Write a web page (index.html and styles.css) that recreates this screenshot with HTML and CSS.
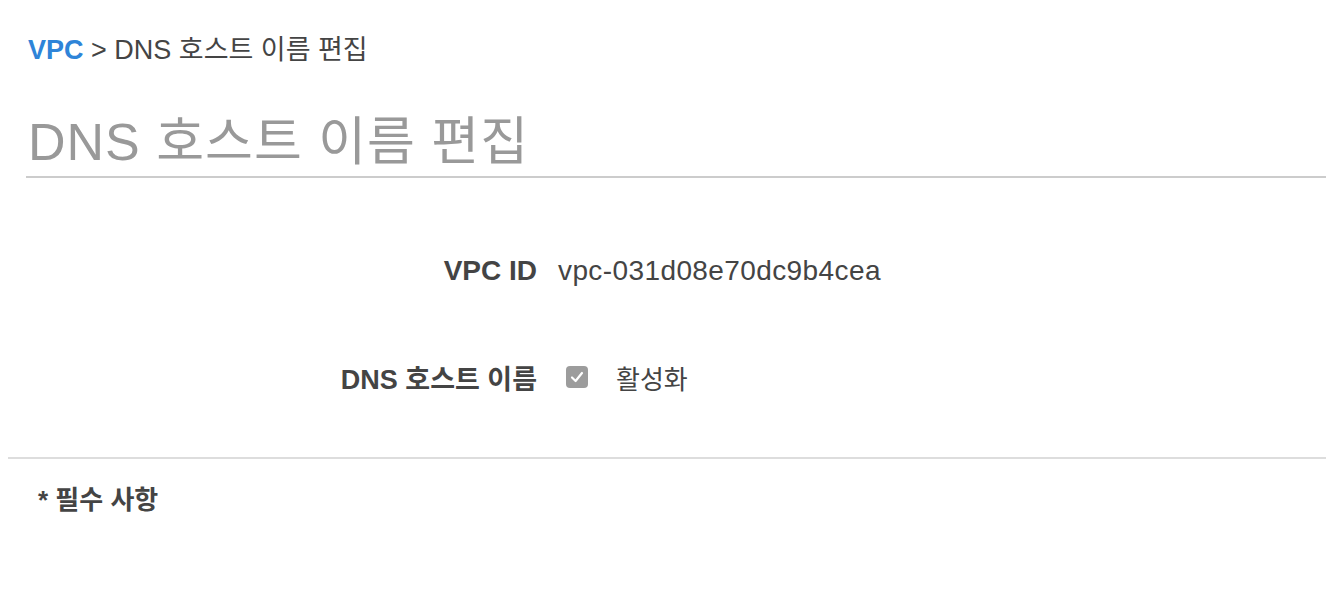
FILE: index.html
```html
<!DOCTYPE html>
<html lang="ko">
<head>
<meta charset="utf-8">
<link rel="stylesheet" href="styles.css">
</head>
<body>
<div class="page">
  <div class="breadcrumb"><a class="crumb-link">VPC</a> &gt; DNS 호스트 이름 편집</div>
  <h1 class="title">DNS 호스트 이름 편집</h1>
  <div class="form">
    <div class="row row-id">
      <div class="label">VPC ID</div>
      <div class="value">vpc-031d08e70dc9b4cea</div>
    </div>
    <div class="row row-dns">
      <div class="label">DNS 호스트 이름</div>
      <div class="value check-wrap">
        <span class="checkbox"><svg viewBox="0 0 22 22" width="22" height="22"><path d="M6 11.5 L9.6 15 L16 7" fill="none" stroke="#fff" stroke-width="2.2" stroke-linecap="round" stroke-linejoin="round"/></svg></span>
        <span class="check-label">활성화</span>
      </div>
    </div>
  </div>
  <div class="footer">
    <div class="required">* 필수 사항</div>
  </div>
</div>
</body>
</html>
```
FILE: styles.css
```css
html, body {
  margin: 0;
  padding: 0;
  background: #fff;
}
body {
  font-family: "Liberation Sans", "Noto Sans CJK KR", sans-serif;
  color: #444;
}
.page {
  width: 1326px;
}
.breadcrumb {
  padding: 34px 0 0 28px;
  font-size: 27px;
  line-height: 32px;
  color: #444;
}
.crumb-link {
  color: #2e84d8;
  font-weight: bold;
}
.title {
  margin: 44px 0 0 26px;
  padding: 0 0 2px 2px;
  font-size: 52px;
  line-height: 64px;
  font-weight: normal;
  letter-spacing: 1px;
  color: #999;
  border-bottom: 2px solid #ccc;
}
.form {
  padding-top: 73px;
  padding-bottom: 60px;
  border-bottom: 2px solid #ddd;
  margin-left: 8px;
}
.row {
  display: grid;
  grid-template-columns: 529px auto;
  column-gap: 21px;
  align-items: center;
  height: 40px;
}
.row-dns {
  margin-top: 66px;
}
.label {
  text-align: right;
  font-weight: bold;
  font-size: 27px;
}
.row-id .label,
.row-id .value {
  font-size: 28px;
}
.row-id .value {
  letter-spacing: 0.4px;
}
.value {
  font-size: 27px;
}
.check-wrap {
  display: flex;
  align-items: center;
  padding-left: 8px;
}
.checkbox {
  width: 22px;
  height: 22px;
  background: #9c9c9c;
  border-radius: 4px;
  display: inline-flex;
}
.check-label {
  margin-left: 28px;
  font-size: 26px;
}
.footer {
  padding: 25px 0 0 38px;
}
.required {
  font-weight: bold;
  font-size: 26px;
  line-height: 32px;
}
```
